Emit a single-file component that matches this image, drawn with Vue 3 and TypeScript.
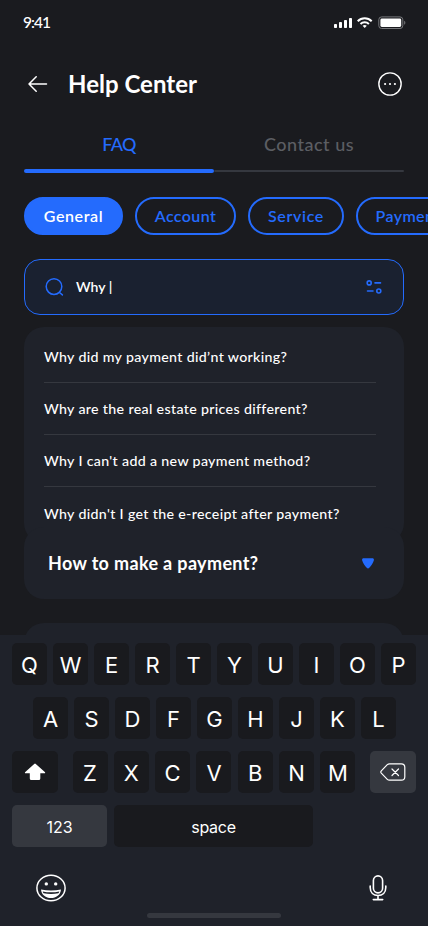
<script setup lang="ts">
interface Chip { label: string; width: string; active?: boolean }
const chips: Chip[] = [
  { label: 'General', width: 'w-general', active: true },
  { label: 'Account', width: 'w-account' },
  { label: 'Service', width: 'w-service' },
  { label: 'Payment', width: 'w-payment' },
]
const suggestions: string[] = [
  'Why did my payment did’nt working?',
  'Why are the real estate prices different?',
  "Why I can't add a new payment method?",
  "Why didn't I get the e-receipt after payment?",
]
const topRow: string[] = 'QWERTYUIOP'.split('')
const homeRow: string[] = 'ASDFGHJKL'.split('')
const bottomRow: string[] = 'ZXCVBNM'.split('')
</script>

<template>
  <div class="screen">
    <main class="content">
      <div class="status">
        <span class="time">9:41</span>
        <svg class="status-icons" width="72" height="14" viewBox="0 0 72 14">
          <g fill="#fff">
            <rect x="0" y="8" width="3" height="4" rx=".8" />
            <rect x="5" y="6" width="3" height="6" rx=".8" />
            <rect x="10" y="4" width="3" height="8" rx=".8" />
            <rect x="15" y="2" width="3" height="10" rx=".8" />
          </g>
          <g fill="none" stroke="#fff" stroke-width="2">
            <path d="M23.7 5.2a10 10 0 0 1 14 0" />
            <path d="M26.5 8a6 6 0 0 1 8.4 0" />
          </g>
          <path d="M28.6 9.8a3.2 3.2 0 0 1 4.2 0l-2.1 2.3z" fill="#fff" />
          <rect x="44.8" y=".9" width="24" height="11.6" rx="2.8" fill="none" stroke="#76777a" />
          <rect x="46.4" y="2.5" width="20.8" height="8.4" rx="1.4" fill="#fff" />
          <path d="M70.2 4.8c1.6.8 1.6 3.2 0 4z" fill="#76777a" />
        </svg>
      </div>

      <header class="header">
        <svg class="back" width="20" height="16" viewBox="0 0 20 16" fill="none" stroke="#fff" stroke-width="1.5" stroke-linecap="round" stroke-linejoin="round">
          <path d="M18.500 8H1M8.2 .8L1 8l7.2 7.2" />
        </svg>
        <h1>Help Center</h1>
        <svg class="more" width="24" height="24" viewBox="0 0 24 24">
          <circle cx="12" cy="12" r="11.15" fill="none" stroke="#fff" stroke-width="1.4" />
          <g fill="#fff">
            <circle cx="7.1" cy="12" r="1.1" />
            <circle cx="12" cy="12" r="1.1" />
            <circle cx="16.9" cy="12" r="1.1" />
          </g>
        </svg>
      </header>

      <nav class="tabs">
        <div class="tab active"><span>FAQ</span></div>
        <div class="tab"><span>Contact us</span></div>
      </nav>

      <div class="chips">
        <button v-for="c in chips" :key="c.label" class="chip" :class="[c.width, { active: c.active }]">{{ c.label }}</button>
      </div>

      <div class="search">
        <svg width="20" height="20" viewBox="0 0 20 20" fill="none" stroke="#246bfd" stroke-width="1.5" stroke-linecap="round">
          <circle cx="9" cy="9.600" r="7.800" />
          <path d="M14.500 15.500l2.900 2.400" />
        </svg>
        <span class="query">Why |</span>
        <svg class="filter" width="16" height="14" viewBox="0 0 16 14" fill="none" stroke="#246bfd" stroke-width="1.6" stroke-linecap="round">
          <circle cx="3.2" cy="2.9" r="2" />
          <path d="M9 2.900h5.500M1.500 11h5.500" />
          <circle cx="12.8" cy="11" r="2" />
        </svg>
      </div>

      <ul class="suggestions">
        <li v-for="s in suggestions" :key="s">{{ s }}</li>
      </ul>

      <section class="question">
        <h2>How to make a payment?</h2>
        <svg width="12" height="11" viewBox="0 0 12 11">
          <path d="M1.6.2h8.8c1.3 0 1.8 1.1 1.4 2.4C11 5.400 9.100 8.100 7.300 9.800c-.8.8-1.800.8-2.600 0C2.900 8.100 1 5.400.2 2.600-.2 1.300.3.2 1.600.2z" fill="#246bfd" />
        </svg>
      </section>
      <section class="question next"></section>
    </main>

    <footer class="keyboard">
      <div class="keys">
        <span v-for="k in topRow" :key="k" class="key">{{ k }}</span>
      </div>
      <div class="keys home">
        <span v-for="k in homeRow" :key="k" class="key">{{ k }}</span>
      </div>
      <div class="keys third">
        <span class="key wide">
          <svg width="22" height="18" viewBox="0 0 22 18">
            <path d="M10.200.9q.8-.7 1.600 0l9 8c.7.700.5 1.300-.5 1.300h-4v5.300q0 1.500-1.500 1.500H7.300q-1.500 0-1.500-1.500v-5.300h-4c-1 0-1.200-.6-.5-1.300z" fill="#fff" />
          </svg>
        </span>
        <div class="letters">
          <span v-for="k in bottomRow" :key="k" class="key">{{ k }}</span>
        </div>
        <span class="key wide light">
          <svg width="26" height="18" viewBox="0 0 26 18" fill="none" stroke="#fff" stroke-width="1.2" stroke-linecap="round" stroke-linejoin="round">
            <path d="M9.500.8h11.800q3.500 0 3.500 3.500v9.400q0 3.500-3.500 3.500H9.500q-1.300 0-2.200-.9L1.300 10.200q-1-1.200 0-2.400L7.300 1.700Q8.200.8 9.500.8z" />
            <path d="M12 6l6.500 6.500M18.500 6L12 12.500" />
          </svg>
        </span>
      </div>
      <div class="keys fourth">
        <span class="key numbers light">123</span>
        <span class="key space">space</span>
      </div>
      <div class="tools">
        <svg width="30" height="28" viewBox="0 0 30 28">
          <ellipse cx="15" cy="14" rx="14.100" ry="12.800" fill="none" stroke="#fff" stroke-width="1.500" />
          <circle cx="10.300" cy="9.900" r="1.700" fill="#fff" />
          <circle cx="19.700" cy="9.900" r="1.700" fill="#fff" />
          <path d="M5 15.500q10 2.200 20 0c-.5 5.500-5 8.600-10 8.600S5.500 21 5 15.500z" fill="#fff" />
          <path d="M6.700 17.400q8.300 1.700 16.600 0c-.2.700-.5 1.300-.9 1.900q-7.400 1.600-14.800 0c-.4-.6-.7-1.200-.9-1.900z" fill="#1f222a" />
        </svg>
        <svg width="18" height="26" viewBox="0 0 18 26" fill="none" stroke="#fff" stroke-width="1.600" stroke-linecap="round">
          <rect x="4.400" y=".9" width="9.200" height="17" rx="4.600" />
          <path d="M1.200 11v1.500c0 5 3.300 8 7.800 8s7.800-3 7.800-8V11M9 20.500v4M4.300 24.600h9.400" />
        </svg>
      </div>
      <div class="indicator"></div>
    </footer>
  </div>
</template>

<style>
body { margin: 0; background: #1a1b1f; }
</style>

<style scoped>
* { box-sizing: border-box; }
svg { display: block; flex: none; }
.screen { width: 428px; height: 926px; display: flex; flex-direction: column; overflow: hidden; background: #1a1b1f; color: #fff; font-family: Lato, "Open Sans", sans-serif; }
.content { height: 635px; flex: none; overflow: hidden; display: flex; flex-direction: column; }
.status { height: 46px; flex: none; display: flex; align-items: center; justify-content: space-between; padding: 0 23px; }
.time { font-size: 15.5px; font-weight: 500; line-height: 20px; letter-spacing: -1px; margin-top: -3px; }
.status-icons { margin-right: -1px; }
.header { height: 76px; flex: none; display: flex; align-items: center; padding: 0 26px 0 28px; }
.header h1 { margin: 0 auto 0 20px; font-size: 24px; line-height: 30px; font-weight: 700; letter-spacing: .02px; }
.tabs { height: 51px; flex: none; display: flex; margin: 0 24px; }
.tab { flex: 1; position: relative; text-align: center; padding-top: 10px; font-size: 18px; line-height: 24px; font-weight: 500; color: #5c5e63; letter-spacing: .5px; }
.tab::after { content: ''; position: absolute; left: 0; right: 0; bottom: 1px; height: 2px; border-radius: 1px; background: #35383f; }
.tab.active { color: #246bfd; letter-spacing: -.7px; }
.tab.active::after { bottom: 0; height: 4px; border-radius: 2px; background: #246bfd; }
.chips { height: 38px; flex: none; display: flex; gap: 12px; margin: 24px 0 0 24px; }
.chip { flex: none; height: 38px; padding: 0; border: 2px solid #246bfd; border-radius: 19px; background: none; color: #246bfd; font: 600 16px/20px Lato, sans-serif; letter-spacing: .4px; }
.chip.active { background: #246bfd; color: #fff; letter-spacing: .6px; }
.w-general { width: 99px; }
.w-account { width: 101px; }
.w-service { width: 96px; letter-spacing: .65px; }
.w-payment { width: 104px; }
.search { height: 56px; flex: none; display: flex; align-items: center; margin: 24px 24px 0; padding: 0 21px 0 20px; border: 1px solid #246bfd; border-radius: 16px; background: #1a2130; }
.query { margin: 0 auto 0 11px; font-size: 14px; line-height: 20px; font-weight: 600; }
.suggestions { height: 216px; flex: none; list-style: none; margin: 12px 24px 0; padding: 4px 28px 0 20px; border-radius: 20px; background: #1f222a; }
.suggestions li { height: 52px; display: flex; align-items: center; padding-top: 1px; border-bottom: 1px solid #35383f; font-size: 14.2px; line-height: 20px; font-weight: 500; white-space: nowrap; letter-spacing: .34px; }
.suggestions li:last-child { border-bottom: 0; }
.question { height: 72px; flex: none; display: flex; align-items: center; justify-content: space-between; margin: -16px 24px 0; padding: 0 30px 0 24px; border-radius: 20px; background: #1f222a; }
.question h2 { margin: 0; font-size: 18px; line-height: 24px; font-weight: 700; letter-spacing: .35px; }
.question.next { margin-top: 24px; }
.keyboard { height: 291px; flex: none; padding: 8px 12px 0; background: #1f222a; font-family: Inter, sans-serif; }
.keys { height: 42px; margin-bottom: 12px; display: flex; justify-content: space-between; }
.key { width: 35px; height: 42px; display: flex; align-items: center; justify-content: center; padding-top: 2px; border-radius: 5px; background: #191a1e; font-size: 22px; font-weight: 400; }
.home { padding: 0 20px 0 21px; }
.letters { width: 283px; display: flex; justify-content: space-between; }
.wide { width: 46px; padding-top: 0; }
.light { background: #35383f; }
.fourth { justify-content: flex-start; gap: 7px; }
.numbers { width: 95px; padding-top: 1px; font-size: 16px; }
.space { width: 199px; padding-top: 1px; font-size: 16px; letter-spacing: -.3px; }
.tools { height: 28px; margin-top: 27px; padding: 0 29px 0 24px; display: flex; align-items: center; justify-content: space-between; }
.indicator { width: 134px; height: 5px; margin: 11px auto 0; border-radius: 3px; background: #35383f; }
</style>
